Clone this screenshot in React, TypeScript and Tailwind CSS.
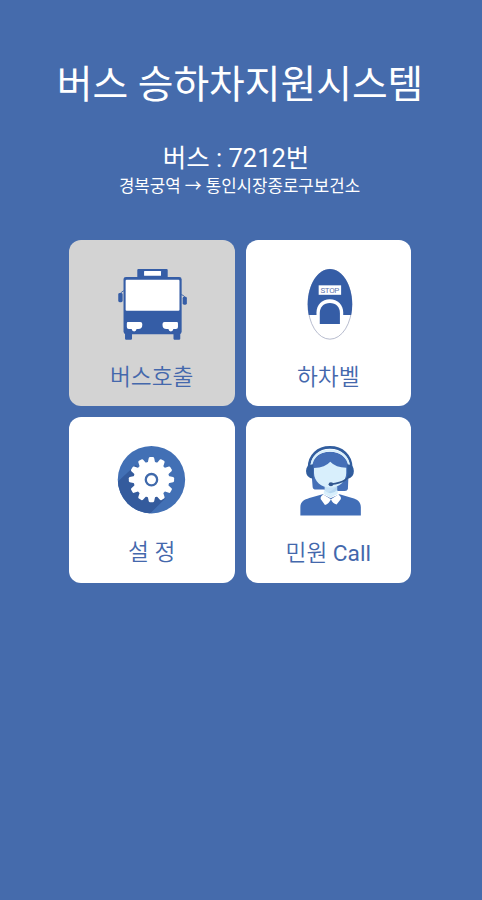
import type { ReactNode } from 'react';

const BLUE = '#355da6';

function BusIcon() {
  return (
    <svg viewBox="0 0 166 110" className="block w-full h-[110px]" aria-hidden="true">
      <g fill={BLUE}>
        <rect x="68.5" y="29" width="30.5" height="10" rx="1" />
        <rect x="54.7" y="37" width="58.3" height="57.3" rx="2.5" />
        <rect x="56.2" y="92" width="7" height="7.8" rx="0.8" />
        <rect x="104.8" y="92" width="6.8" height="7.8" rx="0.8" />
        <rect x="49.4" y="53" width="4.4" height="9.2" rx="1.5" />
        <rect x="114" y="56.8" width="4.2" height="8" rx="1.5" />
      </g>
      <path d="M51 54.5q1-2.5 4-3.8M112.5 54.5q3 .8 4 3" fill="none" stroke={BLUE} strokeWidth="0.9" />
      <g fill="#fff">
        <rect x="75.3" y="31" width="17" height="4.6" rx="0.5" />
        <rect x="56.8" y="39.8" width="54" height="31" rx="1" />
        <path d="M59 82h12.5q2 0 2 2v1q0 4-4 4.200h-1.7q-.4 2.300-2.500 2.300t-2.500-2.300H60q-2 0-2-2V83.500q0-1.500 1-1.500z" />
        <path d="M108.300 82H95.800q-2 0-2 2v1q0 4 4 4.200h1.900q.4 2.300 2.500 2.300t2.500-2.300h2.600q2 0 2-2V83.500q0-1.500-1-1.500z" />
      </g>
    </svg>
  );
}

function BellIcon() {
  return (
    <svg viewBox="0.8 0 166 110" className="block w-full h-[110px]" aria-hidden="true">
      <ellipse cx="85" cy="64.3" rx="22" ry="35" fill="#fff" stroke="#a5abc2" strokeWidth="0.8" />
      <path d="M63.700 75Q62.700 70.500 62.700 64.300C62.700 44.800 72.700 29 85 29s22.300 15.800 22.300 35.300q0 6.200-1 10.700z" fill={BLUE} />
      <rect x="73.7" y="45.3" width="22.5" height="9.5" fill="#fff" />
      <text x="85" y="53" textAnchor="middle" textLength="19" fontSize="8" fill="#6275ad" className="font-['Roboto',sans-serif]">
        STOP
      </text>
      <path d="M71.500 76v-3.500c0-7.500 5.500-13.200 13.400-13.200s13.400 5.700 13.400 13.200V76z" fill="#fff" />
      <path d="M74.800 84V73c0-6 4-10 10.100-10S95 67 95 73v11z" fill={BLUE} />
    </svg>
  );
}

const TEETH = Array.from({ length: 12 }, (_, i) => i * 30);

function GearIcon() {
  return (
    <svg viewBox="0 0 166 110" className="block w-full h-[110px]" aria-hidden="true">
      <clipPath id="gearDisc">
        <circle cx="82.7" cy="62.7" r="33.8" />
      </clipPath>
      <circle cx="82.7" cy="62.7" r="33.8" fill="#4270b5" />
      <path d="M67 48L43 70v35h30l24-24z" fill="#345b9d" clipPath="url(#gearDisc)" />
      <g transform="translate(82.7 62.7)" fill="#fff">
        <circle r="18" />
        {TEETH.map((angle) => (
          <path key={angle} d="M-3.700-17L-2.700-21.700q.3-1 1.300-1h2.800q1 0 1.300 1L3.700-17z" transform={`rotate(${angle})`} />
        ))}
        <circle r="5.7" stroke="#3f69ab" strokeWidth="2.3" />
      </g>
    </svg>
  );
}

function AgentIcon() {
  return (
    <svg viewBox="0.8 0 166 110" className="block w-full h-[110px]" aria-hidden="true">
      <g transform="translate(45 23) scale(.3333)">
        <path d="M63 80C66 52 91 35 120 35s54 17 57 45l-3 67q-2 6-9 6h-28l-36-4H78q-9 0-10-7z" fill="#446fb7" />
        <path d="M104 132h37v29l-19 12-18-12z" fill="#c5e1f6" />
        <path d="M72 84q34-2 49-19 17 18 48 18v16c0 25-21 44-48 44S72 124 72 99z" fill="#d8effc" />
        <path d="M103 158q20 0 39-19v20l-19 10z" fill="#b5d6f0" />
        <path d="M31 227v-25c0-18 12-23 27-28l40-11 24 12 27-12 38 11c15 4 26 11 26 28v25z" fill="#416eb7" />
        <path d="M101 162l21 9 21-9-1-12q-20 20-40 0z" fill="#d8effc" />
        <path d="M100 164q-9 5-8 13l13 18q12-3 18-17zM145 164q9 5 8 13l-13 17q-12-3-17-16z" fill="#fff" />
        <path d="M57 82C58 47 83 22 120 22s63 25 64 60" fill="none" stroke="#315d9e" strokeWidth="8" />
        <path d="M64 78C67 47 91 31 120 31s54 16 58 47" fill="none" stroke="#d8effc" strokeWidth="6" />
        <path d="M70 73v43q-22-2-22-23 0-19 22-20zM172 73v43q20-2 20-23 0-19-20-20z" fill="#315d9e" />
        <path d="M180 106q-12 17-32 22-11 4-26 5" fill="none" stroke="#31578f" strokeWidth="5" strokeLinecap="round" />
        <ellipse cx="123" cy="133" rx="7" ry="6" fill="#31578f" />
      </g>
    </svg>
  );
}

interface MenuCardProps {
  label: ReactNode;
  icon: ReactNode;
  active?: boolean;
  labelClass?: string;
}

function MenuCard({ label, icon, active = false, labelClass = 'mt-[12px]' }: MenuCardProps) {
  return (
    <button
      type="button"
      className={`flex flex-col items-center h-[166px] rounded-[12px] ${active ? 'bg-[#d3d3d3]' : 'bg-white'}`}
    >
      {icon}
      <span className={`text-[22.7px] leading-[32px] font-[350] text-[#4468ac] whitespace-pre ${labelClass}`}>
        {label}
      </span>
    </button>
  );
}

export default function App() {
  return (
    <main className="min-h-screen bg-[#456bac] text-white font-['Roboto','Noto_Sans_CJK_KR',sans-serif]">
      <header className="flex flex-col items-center pt-[56px] whitespace-nowrap">
        <h1 className="mr-[2px] text-[38.8px] leading-[58px] font-normal">버스 승하차지원시스템</h1>
        <p className="mt-[26px] mr-[10px] text-[25.5px] leading-[36px]">버스 : 7212번</p>
        <p className="mr-[3px] text-[16.8px] leading-[20px]">경복궁역 → 통인시장종로구보건소</p>
      </header>
      <section className="grid grid-cols-2 gap-[11px] w-[342px] mt-[44px] ml-[69px]">
        <MenuCard label="버스호출" icon={<BusIcon />} active />
        <MenuCard label="하차벨" icon={<BellIcon />} />
        <MenuCard label="설 정" icon={<GearIcon />} labelClass="mt-[10px]" />
        <MenuCard
          label={<>민원 <span className="font-normal">Call</span></>}
          icon={<AgentIcon />}
          labelClass="mt-[11px]"
        />
      </section>
    </main>
  );
}
